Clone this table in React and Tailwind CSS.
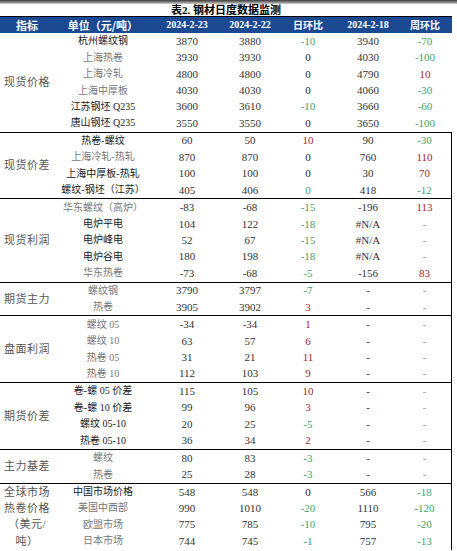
const G = 'text-[#3aa566]'
const R = 'text-[#a3262c]'
const K = 'text-[#222]'
const D = 'text-[#9a9a9a]'

// [name, dark?, v23, v22, [day, color], v18, [week, color]]
const groups = [
  {
    label: ['现货价格'],
    border: false,
    rows: [
      ['杭州螺纹钢', true, '3870', '3880', ['-10', G], '3940', ['-70', G]],
      ['上海热卷', false, '3930', '3930', ['0', K], '4030', ['-100', G]],
      ['上海冷轧', false, '4800', '4800', ['0', K], '4790', ['10', R]],
      ['上海中厚板', false, '4030', '4030', ['0', K], '4060', ['-30', G]],
      ['江苏钢坯 Q235', true, '3600', '3610', ['-10', G], '3660', ['-60', G]],
      ['唐山钢坯 Q235', true, '3550', '3550', ['0', K], '3650', ['-100', G]],
    ],
  },
  {
    label: ['现货价差'],
    border: true,
    rows: [
      ['热卷-螺纹', true, '60', '50', ['10', R], '90', ['-30', G]],
      ['上海冷轧-热轧', false, '870', '870', ['0', K], '760', ['110', R]],
      ['上海中厚板-热轧', true, '100', '100', ['0', K], '30', ['70', R]],
      ['螺纹-钢坯（江苏）', true, '405', '406', ['0', G], '418', ['-12', G]],
    ],
  },
  {
    label: ['现货利润'],
    border: true,
    rows: [
      ['华东螺纹（高炉）', false, '-83', '-68', ['-15', G], '-196', ['113', R]],
      ['电炉平电', true, '104', '122', ['-18', G], '#N/A', ['-', D]],
      ['电炉峰电', true, '52', '67', ['-15', G], '#N/A', ['-', D]],
      ['电炉谷电', true, '180', '198', ['-18', G], '#N/A', ['-', D]],
      ['华东热卷', false, '-73', '-68', ['-5', G], '-156', ['83', R]],
    ],
  },
  {
    label: ['期货主力'],
    border: true,
    rows: [
      ['螺纹钢', false, '3790', '3797', ['-7', G], '-', ['-', D]],
      ['热卷', false, '3905', '3902', ['3', R], '-', ['-', D]],
    ],
  },
  {
    label: ['盘面利润'],
    border: true,
    rows: [
      ['螺纹 05', false, '-34', '-34', ['1', R], '-', ['-', D]],
      ['螺纹 10', false, '63', '57', ['6', R], '-', ['-', D]],
      ['热卷 05', false, '31', '21', ['11', R], '-', ['-', D]],
      ['热卷 10', false, '112', '103', ['9', R], '-', ['-', D]],
    ],
  },
  {
    label: ['期货价差'],
    border: true,
    rows: [
      ['卷-螺 05 价差', true, '115', '105', ['10', R], '-', ['-', D]],
      ['卷-螺 10 价差', true, '99', '96', ['3', R], '-', ['-', D]],
      ['螺纹 05-10', true, '20', '25', ['-5', G], '-', ['-', D]],
      ['热卷 05-10', true, '36', '34', ['2', R], '-', ['-', D]],
    ],
  },
  {
    label: ['主力基差'],
    border: true,
    rows: [
      ['螺纹', false, '80', '83', ['-3', G], '-', ['-', D]],
      ['热卷', false, '25', '28', ['-3', G], '-', ['-', D]],
    ],
  },
  {
    label: ['全球市场', '热卷价格', '（美元/', '吨）'],
    border: true,
    rows: [
      ['中国市场价格', true, '548', '548', ['0', K], '566', ['-18', G]],
      ['美国中西部', false, '990', '1010', ['-20', G], '1110', ['-120', G]],
      ['欧盟市场', false, '775', '785', ['-10', G], '795', ['-20', G]],
      ['日本市场', false, '744', '745', ['-1', G], '757', ['-13', G]],
    ],
  },
]

function Row({ row }) {
  const [name, dark, a, b, day, c, week] = row
  return (
    <div className="grid h-[16.45px] grid-cols-[98px_70px_56px_60px_60px_1fr] items-center text-center leading-none">
      <span className={`text-[10px] ${dark ? 'text-[#202020]' : 'text-[#777]'}`}>{name}</span>
      <span className="text-[11px] text-[#333]">{a}</span>
      <span className="text-[11px] text-[#333]">{b}</span>
      <span className={`text-[11px] ${day[1]}`}>{day[0]}</span>
      <span className="text-[11px] text-[#333]">{c}</span>
      <span className={`text-[11px] ${week[1]}`}>{week[0]}</span>
    </div>
  )
}

function Group({ group, first }) {
  return (
    <div
      className={`flex ${first ? '' : 'border-t border-black'} ${group.border ? 'border-r border-r-black' : ''}`}
    >
      <div className="flex w-[54px] shrink-0 flex-col items-center justify-center text-[11px] tracking-[0.5px] text-[#555]">
        {group.label.map((l) => (
          <span key={l} className="flex h-[16.45px] items-center leading-none">
            {l}
          </span>
        ))}
      </div>
      <div className="flex-1">
        {group.rows.map((r, i) => (
          <Row key={i} row={r} />
        ))}
      </div>
    </div>
  )
}

export default function App() {
  return (
    <div className="h-[551px] w-[457px] overflow-hidden bg-white font-['Liberation_Serif','Noto_Sans_CJK_SC',serif]">
      <div className="h-[4px] bg-gradient-to-b from-[#3c3c3c] to-[#cfcfcf]" />
      <div className="w-[452px]">
        <div className="flex h-[13px] items-center justify-center border-b border-black text-[11px] font-bold leading-none text-black">
          表2. 钢材日度数据监测
        </div>
        <div className="grid h-[16px] grid-cols-[54px_98px_70px_56px_60px_60px_1fr] items-center bg-[#1b4a93] text-center text-[10px] font-bold leading-none text-white">
          <span className="font-['Noto_Sans_CJK_SC',sans-serif] text-[11px]">指标</span>
          <span className="font-['Noto_Sans_CJK_SC',sans-serif] text-[11px]">单位（元/吨）</span>
          <span>2024-2-23</span>
          <span>2024-2-22</span>
          <span className="font-['Noto_Sans_CJK_SC',sans-serif] text-[10px]">日环比</span>
          <span>2024-2-18</span>
          <span className="font-['Noto_Sans_CJK_SC',sans-serif] text-[10px]">周环比</span>
        </div>
        {groups.map((g, i) => (
          <Group key={i} group={g} first={i === 0} />
        ))}
      </div>
    </div>
  )
}
